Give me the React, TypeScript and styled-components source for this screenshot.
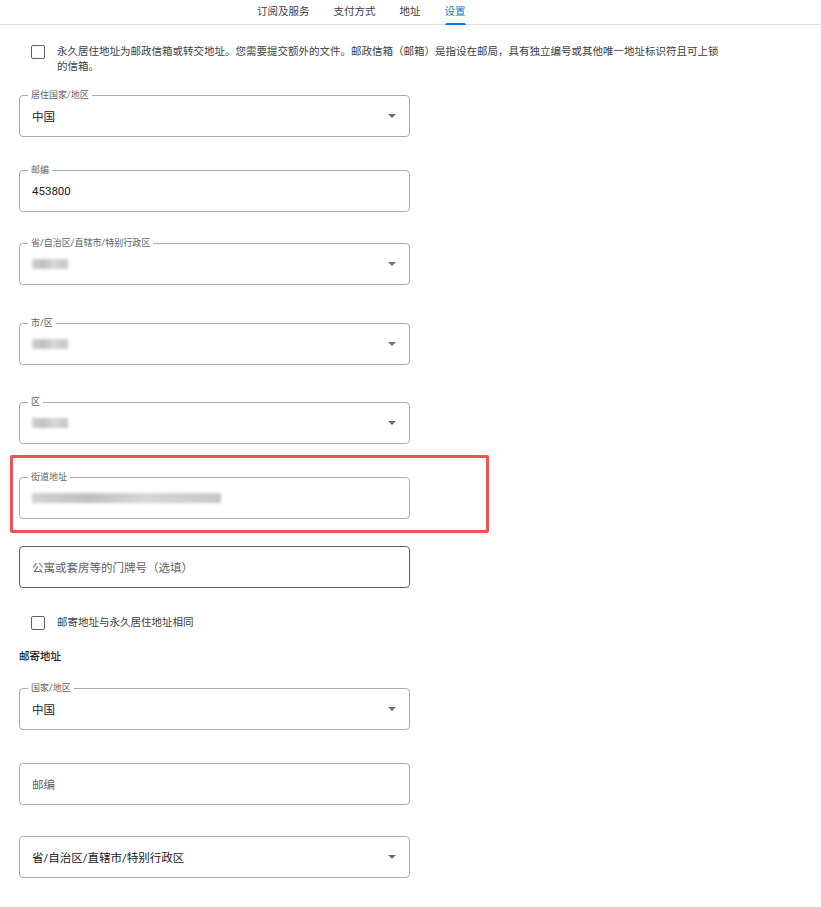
import React from "react";
import styled, { createGlobalStyle } from "styled-components";

const GlobalStyle = createGlobalStyle`
  body {
    margin: 0;
    background: #ffffff;
    font-family: Roboto, "Noto Sans CJK SC", sans-serif;
    color: #202124;
  }
`;

const TabBar = styled.nav`
  display: flex;
  gap: 24px;
  height: 24px;
  padding-left: 257px;
  border-bottom: 1px solid #dadce0;
`;

const Tab = styled.div<{ active?: boolean }>`
  position: relative;
  font-size: 10.5px;
  line-height: 24px;
  color: ${props => (props.active ? "#1a73e8" : "#3c4043")};

  &::after {
    content: "";
    display: ${props => (props.active ? "block" : "none")};
    position: absolute;
    left: 0;
    right: 0;
    bottom: -1px;
    height: 2px;
    border-radius: 2px 2px 0 0;
    background: #1a73e8;
  }
`;

const Form = styled.div`
  display: flex;
  flex-direction: column;
  align-items: flex-start;
  padding-left: 19px;
`;

const CheckRow = styled.label<{ top: number }>`
  display: flex;
  align-items: flex-start;
  gap: 12px;
  margin-top: ${props => props.top}px;
  padding-left: 12px;
  font-size: 10.5px;
  line-height: 15px;
  color: #3c4043;
`;

const Box = styled.span`
  flex: none;
  width: 12px;
  height: 12px;
  margin-top: 1px;
  border: 1.5px solid #5f6368;
  border-radius: 2px;
`;

const CheckText = styled.span`
  max-width: 664px;
`;

const Heading = styled.div<{ top: number }>`
  margin-top: ${props => props.top}px;
  font-size: 10.5px;
  font-weight: 500;
  line-height: 15px;
  color: #202124;
`;

const Field = styled.div<{ top: number; dark?: boolean }>`
  position: relative;
  display: flex;
  align-items: center;
  box-sizing: border-box;
  width: 391px;
  height: 42px;
  margin-top: ${props => props.top}px;
  padding: 0 12px;
  border: 1px solid ${props => (props.dark ? "#5f6368" : "#a9abae")};
  border-radius: 4px;
`;

const Label = styled.span`
  position: absolute;
  left: 8px;
  top: -7px;
  padding: 0 3px;
  background: #ffffff;
  font-size: 9px;
  line-height: 12px;
  color: #5f6368;
`;

const Value = styled.span<{ muted?: boolean }>`
  flex: 1;
  font-size: 11.5px;
  color: ${props => (props.muted ? "#5f6368" : "#202124")};
`;

const Arrow = styled.span`
  width: 0;
  height: 0;
  margin-right: 1px;
  border-left: 4.5px solid transparent;
  border-right: 4.5px solid transparent;
  border-top: 4.5px solid #6b6e72;
`;

const Blur = styled.span<{ width: number }>`
  display: block;
  width: ${props => props.width}px;
  height: 10px;
  background: linear-gradient(90deg, #c9c9c9, #b5b5b5 30%, #cfcfcf 60%, #bdbdbd);
  filter: blur(1.5px);
  opacity: 0.85;
`;

const Highlight = styled.div`
  box-sizing: border-box;
  width: 479px;
  margin: 11px 0 0 -9px;
  padding: 19px 0 11px 6px;
  border: 3px solid #f05252;
  border-radius: 2px;
`;

type FieldProps = {
  top: number;
  label?: string;
  children: React.ReactNode;
  select?: boolean;
  dark?: boolean;
};

const OutlinedField = ({ top, label, children, select, dark }: FieldProps) => (
  <Field top={top} dark={dark}>
    {label && <Label>{label}</Label>}
    {children}
    {select && <Arrow />}
  </Field>
);

export default function App() {
  return (
    <>
      <GlobalStyle />
      <TabBar>
        <Tab>订阅及服务</Tab>
        <Tab>支付方式</Tab>
        <Tab>地址</Tab>
        <Tab active>设置</Tab>
      </TabBar>
      <Form>
        <CheckRow top={19}>
          <Box />
          <CheckText>
            永久居住地址为邮政信箱或转交地址。您需要提交额外的文件。邮政信箱（邮箱）是指设在邮局，具有独立编号或其他唯一地址标识符且可上锁的信箱。
          </CheckText>
        </CheckRow>

        <OutlinedField top={21} label="居住国家/地区" select>
          <Value>中国</Value>
        </OutlinedField>
        <OutlinedField top={33} label="邮编">
          <Value>453800</Value>
        </OutlinedField>
        <OutlinedField top={31} label="省/自治区/直辖市/特别行政区" select>
          <Value>
            <Blur width={36} />
          </Value>
        </OutlinedField>
        <OutlinedField top={38} label="市/区" select>
          <Value>
            <Blur width={36} />
          </Value>
        </OutlinedField>
        <OutlinedField top={37} label="区" select>
          <Value>
            <Blur width={36} />
          </Value>
        </OutlinedField>

        <Highlight>
          <OutlinedField top={0} label="街道地址">
            <Value>
              <Blur width={189} />
            </Value>
          </OutlinedField>
        </Highlight>

        <OutlinedField top={13} dark>
          <Value muted>公寓或套房等的门牌号（选填）</Value>
        </OutlinedField>

        <CheckRow top={27}>
          <Box />
          <span>邮寄地址与永久居住地址相同</span>
        </CheckRow>

        <Heading top={19}>邮寄地址</Heading>

        <OutlinedField top={24} label="国家/地区" select>
          <Value>中国</Value>
        </OutlinedField>
        <OutlinedField top={33}>
          <Value muted>邮编</Value>
        </OutlinedField>
        <OutlinedField top={31} select>
          <Value>省/自治区/直辖市/特别行政区</Value>
        </OutlinedField>
      </Form>
    </>
  );
}
